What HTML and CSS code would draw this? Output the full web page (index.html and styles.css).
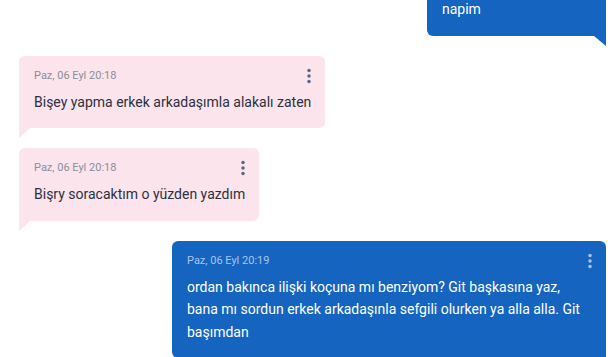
FILE: index.html
```html
<!DOCTYPE html>
<html lang="tr">
<head>
<meta charset="utf-8">
<title>Sohbet</title>
<link rel="stylesheet" href="styles.css">
</head>
<body>
<div class="chat">
  <div class="msg msg-out msg-first">
    <div class="msg-head">
      <span class="msg-time">Paz, 06 Eyl 20:17</span>
      <svg class="msg-more" width="4" height="16" viewBox="0 0 4 16"><circle cx="2" cy="2.6" r="1.75"/><circle cx="2" cy="8" r="1.75"/><circle cx="2" cy="13.4" r="1.75"/></svg>
    </div>
    <div class="msg-text">napim</div>
  </div>
  <div class="msg msg-in">
    <div class="msg-head">
      <span class="msg-time">Paz, 06 Eyl 20:18</span>
      <svg class="msg-more" width="4" height="16" viewBox="0 0 4 16"><circle cx="2" cy="2.6" r="1.75"/><circle cx="2" cy="8" r="1.75"/><circle cx="2" cy="13.4" r="1.75"/></svg>
    </div>
    <div class="msg-text">Bişey yapma erkek arkadaşımla alakalı zaten</div>
  </div>
  <div class="msg msg-in">
    <div class="msg-head">
      <span class="msg-time">Paz, 06 Eyl 20:18</span>
      <svg class="msg-more" width="4" height="16" viewBox="0 0 4 16"><circle cx="2" cy="2.6" r="1.75"/><circle cx="2" cy="8" r="1.75"/><circle cx="2" cy="13.4" r="1.75"/></svg>
    </div>
    <div class="msg-text">Bişry soracaktım o yüzden yazdım</div>
  </div>
  <div class="msg msg-out">
    <div class="msg-head">
      <span class="msg-time">Paz, 06 Eyl 20:19</span>
      <svg class="msg-more" width="4" height="16" viewBox="0 0 4 16"><circle cx="2" cy="2.6" r="1.75"/><circle cx="2" cy="8" r="1.75"/><circle cx="2" cy="13.4" r="1.75"/></svg>
    </div>
    <div class="msg-text">ordan bakınca ilişki koçuna mı benziyom? Git başkasına yaz, bana mı sordun erkek arkadaşınla sefgili olurken ya alla alla. Git başımdan</div>
  </div>
</div>
</body>
</html>
```

FILE: styles.css
```css
html, body {
  margin: 0;
  padding: 0;
  background: #ffffff;
  overflow: hidden;
}

body {
  font-family: Roboto, "Noto Sans", "Liberation Sans", sans-serif;
  width: 613px;
  height: 357px;
}

.chat {
  display: flex;
  flex-direction: column;
  gap: 20px;
  margin-top: -37px;
  padding: 0 7px 0 19px;
}

.msg {
  position: relative;
  box-sizing: border-box;
  max-width: 434px;
  min-width: 179px;
  padding: 12px 14px 15px 15px;
  border-radius: 6px;
}

.msg-in {
  align-self: flex-start;
  background: #fce4ec;
  color: #2b313c;
  border-bottom-left-radius: 0;
}

.msg-out {
  align-self: flex-end;
  background: #1565c0;
  color: #ffffff;
  border-bottom-right-radius: 0;
}

.msg-in::after {
  content: "";
  position: absolute;
  left: 0;
  top: 100%;
  border-top: 10px solid #fce4ec;
  border-right: 11px solid transparent;
}

.msg-out::after {
  content: "";
  position: absolute;
  right: 0;
  top: 100%;
  border-top: 10px solid #1565c0;
  border-left: 12px solid transparent;
}

.msg-head {
  display: flex;
  align-items: center;
  justify-content: space-between;
  height: 16px;
}

.msg-time {
  font-size: 11px;
  line-height: 16px;
}

.msg-in .msg-time {
  color: #8b8e98;
}

.msg-out .msg-time {
  color: #a9c3ec;
}

.msg-in .msg-more {
  fill: #56688a;
}

.msg-out .msg-more {
  fill: #a9c3ec;
}

.msg-text {
  margin-top: 7px;
  font-size: 14px;
  line-height: 22.5px;
}
```
